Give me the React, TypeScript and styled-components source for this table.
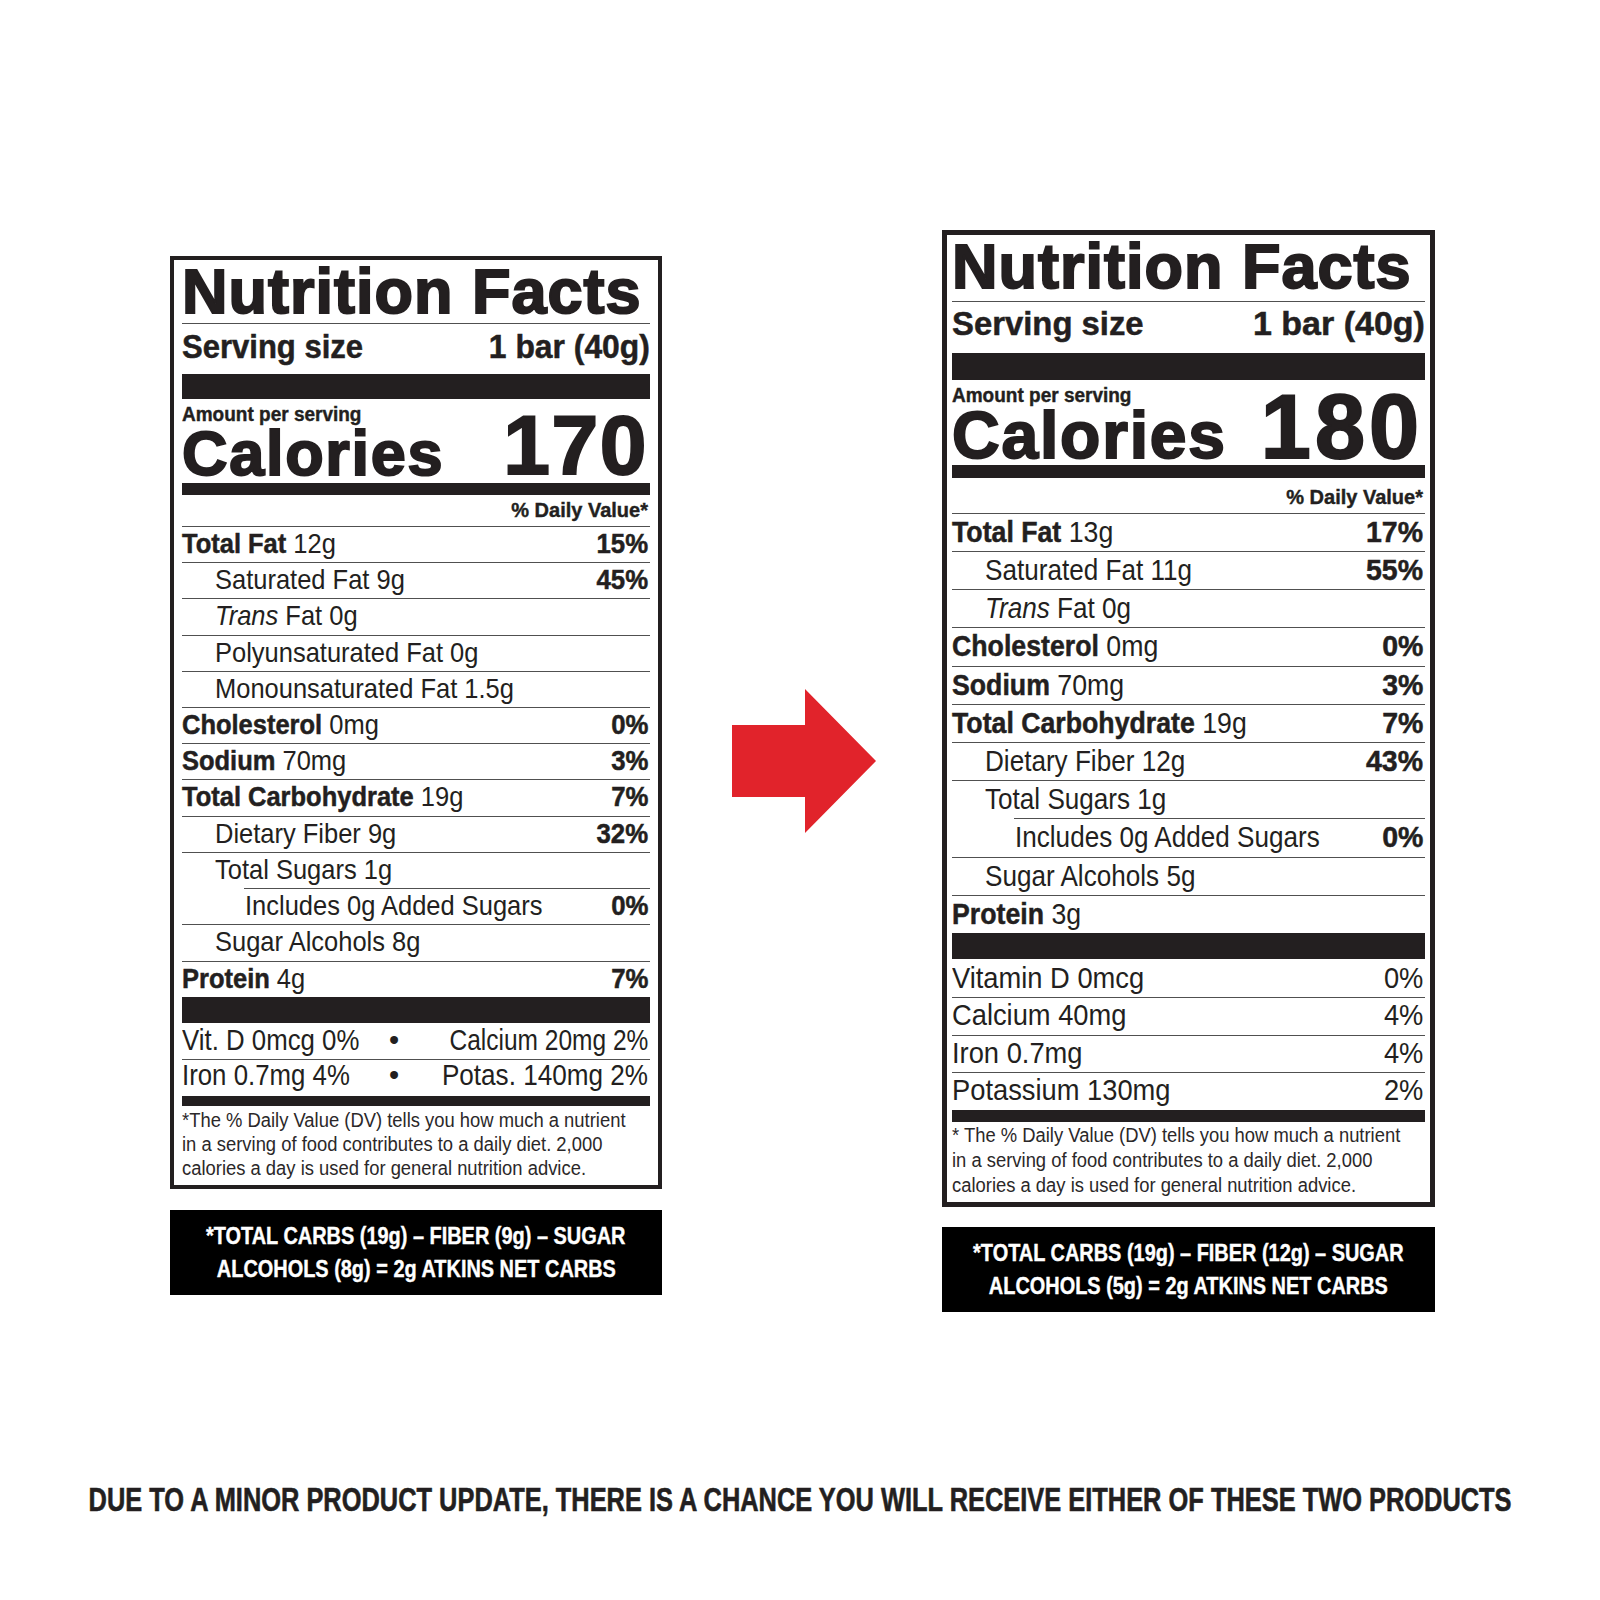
import React from "react";
import styled, { createGlobalStyle } from "styled-components";

const INK = "#231f20";
const RULE = "#505050";
const SANS = `"Liberation Sans", Arial, sans-serif`;

const fit = (h: number, b: number, f: number) => {
  const p = 2 * (b - h / 2 - 0.3465 * f);
  return p >= 0 ? { pt: p, pb: 0, lh: h - p } : { pt: 0, pb: -p, lh: h + p };
};

interface LineProps {
  $h: number;
  $b: number;
  $f: number;
}

const lineCss = ({ $h, $b, $f }: LineProps) => {
  const { pt, pb, lh } = fit($h, $b, $f);
  return `padding-top:${pt}px;padding-bottom:${pb}px;line-height:${lh}px;font-size:${$f}px;`;
};

const Global = createGlobalStyle`
  html, body { margin: 0; padding: 0; background: #ffffff; }
  body { font-family: ${SANS}; color: ${INK}; }
`;

const Page = styled.div`
  width: 1600px;
  height: 1600px;
  display: flex;
  flex-direction: column;
  overflow: hidden;
`;

const Stage = styled.div`
  height: 1480px;
  display: flex;
  align-items: flex-start;
  padding-left: 170px;
  box-sizing: border-box;
`;

const Column = styled.div<{ $w: number; $top: number; $left: number }>`
  width: ${(p) => p.$w}px;
  margin-top: ${(p) => p.$top}px;
  margin-left: ${(p) => p.$left}px;
  display: flex;
  flex-direction: column;
  flex: none;
`;

const ArrowWrap = styled.div`
  width: 144px;
  height: 144px;
  margin-top: 689px;
  margin-left: 70px;
  flex: none;
  svg {
    display: block;
  }
`;

/* horizontally squeezed text, for the condensed look of the label face */
const Sq = styled.span<{ $sx: number; $o?: "left" | "right" | "center" }>`
  display: inline-block;
  transform: scaleX(${(p) => p.$sx});
  transform-origin: ${(p) => p.$o || "left"} center;
  white-space: nowrap;
`;

const LabelBox = styled.div<{ $border: number; $pad: number }>`
  border: ${(p) => p.$border}px solid ${INK};
  padding: 0 ${(p) => p.$pad}px;
  background: #fff;
`;

const Heavy = styled.div<LineProps & { $ls: number }>`
  font-family: ${SANS};
  font-weight: 700;
  -webkit-text-stroke: 2px ${INK};
  letter-spacing: ${(p) => p.$ls}px;
  white-space: nowrap;
  ${lineCss}
`;

const ThinRule = styled.div`
  height: 1px;
  background: ${RULE};
`;

const Serving = styled.div<LineProps>`
  display: flex;
  justify-content: space-between;
  font-weight: 700;
  -webkit-text-stroke: 0.5px ${INK};
  white-space: nowrap;
  ${lineCss}
`;

const Bar = styled.div<{ $h: number }>`
  height: ${(p) => p.$h}px;
  background: ${INK};
`;

const CalBlock = styled.div`
  display: flex;
  justify-content: space-between;
  align-items: flex-end;
`;

const CalLeft = styled.div`
  display: flex;
  flex-direction: column;
`;

const Amount = styled.div<LineProps>`
  font-weight: 700;
  -webkit-text-stroke: 0.4px ${INK};
  white-space: nowrap;
  ${lineCss}
`;

const CalNum = styled(Heavy)`
  padding-right: 2px;
`;

const DVHeader = styled.div<LineProps>`
  text-align: right;
  font-weight: 700;
  -webkit-text-stroke: 0.4px ${INK};
  padding-right: 2px;
  ${lineCss}
`;

const Row = styled.div<LineProps & { $inset: number; $indent: number; $line: boolean }>`
  display: flex;
  justify-content: space-between;
  white-space: nowrap;
  ${lineCss}
  margin-left: ${(p) => p.$inset}px;
  padding-left: ${(p) => p.$indent - p.$inset}px;
  padding-right: 2px;
  border-top: ${(p) => (p.$line ? `1px solid ${RULE}` : "none")};
`;

const B = styled.span`
  font-weight: 700;
  -webkit-text-stroke: 0.5px ${INK};
`;

const I = styled.span`
  font-style: italic;
`;

const VitGrid = styled.div<LineProps & { $line: boolean }>`
  display: grid;
  grid-template-columns: 200px 24px 1fr;
  white-space: nowrap;
  ${lineCss}
  padding-right: 2px;
  border-top: ${(p) => (p.$line ? `1px solid ${RULE}` : "none")};
`;

const Bullet = styled.span`
  text-align: center;
`;

const RightCell = styled.span`
  text-align: right;
`;

const Footnote = styled.div<{ $f: number; $lh: number; $pt: number; $pb: number }>`
  font-size: ${(p) => p.$f}px;
  line-height: ${(p) => p.$lh}px;
  padding-top: ${(p) => p.$pt}px;
  padding-bottom: ${(p) => p.$pb}px;
  white-space: nowrap;
  color: #2b2829;
`;

const FootLine = styled.div<{ $sx: number }>`
  transform: scaleX(${(p) => p.$sx});
  transform-origin: left center;
`;

const NetCarbs = styled.div<{ $gap: number }>`
  margin-top: ${(p) => p.$gap}px;
  height: 85px;
  box-sizing: border-box;
  padding-top: 9px;
  background: #000;
  color: #fff;
  font-weight: 700;
  -webkit-text-stroke: 0.4px #fff;
  font-size: 24px;
  line-height: 33px;
  white-space: nowrap;
`;

const CenterLine = styled.div`
  display: flex;
  justify-content: center;
`;

const Footer = styled.div`
  display: flex;
  justify-content: center;
  font-weight: 700;
  -webkit-text-stroke: 0.6px ${INK};
  font-size: 33px;
  line-height: 40px;
  white-space: nowrap;
  color: ${INK};
`;

type Nutrient = {
  name: string;
  italic?: string;
  amount: string;
  dv?: string;
  bold?: boolean;
  level: 0 | 1 | 2;
};

type Spec = {
  border: number;
  pad: number;
  titleH: number;
  servingH: number;
  servingB: number;
  servingSx1: number;
  servingSx2: number;
  bar1: number;
  amountH: number;
  amountB: number;
  calH: number;
  calB: number;
  calF: number;
  calLs: number;
  numH: number;
  numB: number;
  numF: number;
  numLs: number;
  bar2: number;
  dvH: number;
  dvB: number;
  rowH: number;
  rowB: number;
  rowF: number;
  sxReg: number;
  sxBoldRow: number;
  sxDv: number;
  bar3: number;
  bar4: number;
  fnLh: number;
  fnPt: number;
  fnPb: number;
};

const leftSpec: Spec = {
  border: 4,
  pad: 8,
  titleH: 63,
  servingH: 50,
  servingB: 34,
  servingSx1: 0.94,
  servingSx2: 0.965,
  bar1: 25,
  amountH: 28,
  amountB: 23,
  calH: 56,
  calB: 48,
  calF: 63,
  calLs: 1.7,
  numH: 68,
  numB: 60,
  numF: 84,
  numLs: 1.5,
  bar2: 12,
  dvH: 31,
  dvB: 23,
  rowH: 35.23,
  rowB: 26.5,
  rowF: 28,
  sxReg: 0.91,
  sxBoldRow: 0.91,
  sxDv: 0.92,
  bar3: 26,
  bar4: 10,
  fnLh: 24,
  fnPt: 2,
  fnPb: 5,
};

const rightSpec: Spec = {
  border: 5,
  pad: 5,
  titleH: 66,
  servingH: 51,
  servingB: 33,
  servingSx1: 0.995,
  servingSx2: 1.03,
  bar1: 27,
  amountH: 28,
  amountB: 23,
  calH: 57,
  calB: 50,
  calF: 66,
  calLs: 1.8,
  numH: 65,
  numB: 59,
  numF: 90,
  numLs: 4,
  bar2: 13,
  dvH: 35,
  dvB: 27,
  rowH: 37.18,
  rowB: 28,
  rowF: 30,
  sxReg: 0.87,
  sxBoldRow: 0.89,
  sxDv: 0.95,
  bar3: 26,
  bar4: 12,
  fnLh: 25,
  fnPt: 1.6,
  fnPb: 3.4,
};

const INDENT = [0, 33, 63];

const leftNutrients: Nutrient[] = [
  { name: "Total Fat", amount: "12g", dv: "15%", bold: true, level: 0 },
  { name: "Saturated Fat", amount: "9g", dv: "45%", level: 1 },
  { name: "Fat", italic: "Trans", amount: "0g", level: 1 },
  { name: "Polyunsaturated Fat", amount: "0g", level: 1 },
  { name: "Monounsaturated Fat", amount: "1.5g", level: 1 },
  { name: "Cholesterol", amount: "0mg", dv: "0%", bold: true, level: 0 },
  { name: "Sodium", amount: "70mg", dv: "3%", bold: true, level: 0 },
  { name: "Total Carbohydrate", amount: "19g", dv: "7%", bold: true, level: 0 },
  { name: "Dietary Fiber", amount: "9g", dv: "32%", level: 1 },
  { name: "Total Sugars", amount: "1g", level: 1 },
  { name: "Includes", amount: "0g Added Sugars", dv: "0%", level: 2 },
  { name: "Sugar Alcohols", amount: "8g", level: 1 },
  { name: "Protein", amount: "4g", dv: "7%", bold: true, level: 0 },
];

const rightNutrients: Nutrient[] = [
  { name: "Total Fat", amount: "13g", dv: "17%", bold: true, level: 0 },
  { name: "Saturated Fat", amount: "11g", dv: "55%", level: 1 },
  { name: "Fat", italic: "Trans", amount: "0g", level: 1 },
  { name: "Cholesterol", amount: "0mg", dv: "0%", bold: true, level: 0 },
  { name: "Sodium", amount: "70mg", dv: "3%", bold: true, level: 0 },
  { name: "Total Carbohydrate", amount: "19g", dv: "7%", bold: true, level: 0 },
  { name: "Dietary Fiber", amount: "12g", dv: "43%", level: 1 },
  { name: "Total Sugars", amount: "1g", level: 1 },
  { name: "Includes", amount: "0g Added Sugars", dv: "0%", level: 2 },
  { name: "Sugar Alcohols", amount: "5g", level: 1 },
  { name: "Protein", amount: "3g", bold: true, level: 0 },
];

type LabelProps = {
  spec: Spec;
  calories: string;
  nutrients: Nutrient[];
  vitamins: React.ReactNode;
  footnote: string[];
};

function NutrientRow({ n, s }: { n: Nutrient; s: Spec }) {
  const inset = n.level === 2 ? 62 : 0;
  return (
    <Row $h={s.rowH} $b={s.rowB} $f={s.rowF} $inset={inset} $indent={INDENT[n.level]} $line>
      <Sq $sx={n.bold ? s.sxBoldRow : s.sxReg}>
        {n.italic ? (
          <>
            <I>{n.italic}</I>{" "}
          </>
        ) : null}
        {n.bold ? <B>{n.name}</B> : n.name} {n.amount}
      </Sq>
      {n.dv ? (
        <Sq $sx={s.sxDv} $o="right">
          <B>{n.dv}</B>
        </Sq>
      ) : null}
    </Row>
  );
}

function Label({ spec: s, calories, nutrients, vitamins, footnote }: LabelProps) {
  return (
    <LabelBox $border={s.border} $pad={s.pad}>
      <Heavy $h={s.titleH} $b={53} $f={63} $ls={1}>
        Nutrition Facts
      </Heavy>
      <ThinRule />
      <Serving $h={s.servingH} $b={s.servingB} $f={33}>
        <Sq $sx={s.servingSx1}>Serving size</Sq>
        <Sq $sx={s.servingSx2} $o="right">
          1 bar (40g)
        </Sq>
      </Serving>
      <Bar $h={s.bar1} />
      <CalBlock>
        <CalLeft>
          <Amount $h={s.amountH} $b={s.amountB} $f={20}>
            <Sq $sx={0.95}>Amount per serving</Sq>
          </Amount>
          <Heavy $h={s.calH} $b={s.calB} $f={s.calF} $ls={s.calLs}>
            Calories
          </Heavy>
        </CalLeft>
        <CalNum $h={s.numH} $b={s.numB} $f={s.numF} $ls={s.numLs}>
          {calories}
        </CalNum>
      </CalBlock>
      <Bar $h={s.bar2} />
      <DVHeader $h={s.dvH} $b={s.dvB} $f={20}>
        <Sq $sx={1} $o="right">
          % Daily Value*
        </Sq>
      </DVHeader>
      {nutrients.map((n, i) => (
        <NutrientRow key={i} n={n} s={s} />
      ))}
      <Bar $h={s.bar3} />
      {vitamins}
      <Bar $h={s.bar4} />
      <Footnote $f={20} $lh={s.fnLh} $pt={s.fnPt} $pb={s.fnPb}>
        {footnote.map((l, i) => (
          <FootLine key={i} $sx={0.92}>
            {l}
          </FootLine>
        ))}
      </Footnote>
    </LabelBox>
  );
}

const Arrow = () => (
  <ArrowWrap>
    <svg width="144" height="144" viewBox="0 0 144 144">
      <polygon points="0,36 73,36 73,0 144,72 73,144 73,108 0,108" fill="#e1232b" />
    </svg>
  </ArrowWrap>
);

const leftVitData: [string, number, string, number][] = [
  ["Vit. D 0mcg 0%", 0.89, "Calcium 20mg 2%", 0.845],
  ["Iron 0.7mg 4%", 0.89, "Potas. 140mg 2%", 0.9],
];

const rightVitData = [
  ["Vitamin D 0mcg", "0%"],
  ["Calcium 40mg", "4%"],
  ["Iron 0.7mg", "4%"],
  ["Potassium 130mg", "2%"],
];

export default function App() {
  const leftVits = (
    <>
      {leftVitData.map(([a, sa, c, sc], i) => (
        <VitGrid key={i} $h={36} $b={i === 0 ? 28 : 26} $f={29} $line={i > 0}>
          <Sq $sx={sa}>{a}</Sq>
          <Bullet>•</Bullet>
          <RightCell>
            <Sq $sx={sc} $o="right">
              {c}
            </Sq>
          </RightCell>
        </VitGrid>
      ))}
    </>
  );

  const rightVits = (
    <>
      {rightVitData.map(([a, b], i) => (
        <Row
          key={i}
          $h={i === 0 ? 38 : 36.7}
          $b={i === 0 ? 29 : 27}
          $f={30}
          $inset={0}
          $indent={0}
          $line={i > 0}
        >
          <Sq $sx={0.91}>{a}</Sq>
          <Sq $sx={0.91} $o="right">
            {b}
          </Sq>
        </Row>
      ))}
    </>
  );

  return (
    <Page>
      <Global />
      <Stage>
        <Column $w={492} $top={256} $left={0}>
          <Label
            spec={leftSpec}
            calories="170"
            nutrients={leftNutrients}
            vitamins={leftVits}
            footnote={[
              "*The % Daily Value (DV) tells you how much a nutrient",
              "in a serving of food contributes to a daily diet. 2,000",
              "calories a day is used for general nutrition advice.",
            ]}
          />
          <NetCarbs $gap={21}>
            <CenterLine>
              <Sq $sx={0.83} $o="center">
                *TOTAL CARBS (19g) – FIBER (9g) – SUGAR
              </Sq>
            </CenterLine>
            <CenterLine>
              <Sq $sx={0.83} $o="center">
                ALCOHOLS (8g) = 2g ATKINS NET CARBS
              </Sq>
            </CenterLine>
          </NetCarbs>
        </Column>
        <Arrow />
        <Column $w={493} $top={230} $left={66}>
          <Label
            spec={rightSpec}
            calories="180"
            nutrients={rightNutrients}
            vitamins={rightVits}
            footnote={[
              "* The % Daily Value (DV) tells you how much a nutrient",
              "in a serving of food contributes to a daily diet. 2,000",
              "calories a day is used for general nutrition advice.",
            ]}
          />
          <NetCarbs $gap={20}>
            <CenterLine>
              <Sq $sx={0.83} $o="center">
                *TOTAL CARBS (19g) – FIBER (12g) – SUGAR
              </Sq>
            </CenterLine>
            <CenterLine>
              <Sq $sx={0.83} $o="center">
                ALCOHOLS (5g) = 2g ATKINS NET CARBS
              </Sq>
            </CenterLine>
          </NetCarbs>
        </Column>
      </Stage>
      <Footer>
        <Sq $sx={0.77} $o="center">
          DUE TO A MINOR PRODUCT UPDATE, THERE IS A CHANCE YOU WILL RECEIVE EITHER OF THESE TWO PRODUCTS
        </Sq>
      </Footer>
    </Page>
  );
}
